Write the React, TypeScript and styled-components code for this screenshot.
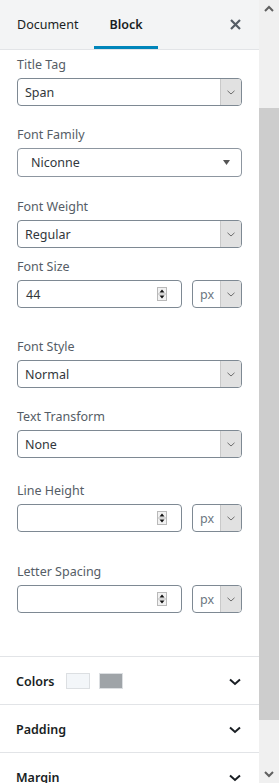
import React from "react";
import styled, { createGlobalStyle } from "styled-components";

const GlobalStyle = createGlobalStyle`
  html, body {
    margin: 0;
    padding: 0;
    overflow: hidden;
    background: #fff;
  }
  body {
    font-family: "Noto Sans", "Open Sans", sans-serif;
    color: #191e23;
  }
`;

const Frame = styled.div`
  display: flex;
  width: 279px;
  height: 783px;
  overflow: hidden;
`;

const Sidebar = styled.div`
  width: 259px;
  display: flex;
  flex-direction: column;
  background: #fff;
  overflow: hidden;
`;

const Header = styled.div`
  height: 49px;
  flex-shrink: 0;
  display: flex;
  align-items: stretch;
  background: #f3f4f5;
  border-bottom: 1px solid #e2e4e7;
  padding-left: 2px;
`;

const Tab = styled.div<{ $active?: boolean }>`
  display: flex;
  align-items: center;
  padding: 3px 15px 0;
  margin-right: 1px;
  font-size: 12.5px;
  color: #191e23;
  font-weight: ${(p) => (p.$active ? 600 : 400)};
  border-bottom: 3px solid ${(p) => (p.$active ? "#0085ba" : "transparent")};
`;

const CloseButton = styled.div`
  margin-left: auto;
  display: flex;
  align-items: center;
  padding: 0 18px 0 12px;
`;

const Body = styled.div`
  padding: 6px 17px 0 17px;
`;

const Field = styled.div<{ $after: number }>`
  margin-bottom: ${(p) => p.$after}px;
`;

const Label = styled.div`
  font-size: 12.5px;
  line-height: 18px;
  color: #555d66;
  margin-bottom: 4px;
`;

const SelectBox = styled.div`
  box-sizing: border-box;
  height: 28px;
  display: flex;
  align-items: stretch;
  border: 1px solid #7e8993;
  border-radius: 4px;
  overflow: hidden;
  background: #fff;
`;

const SelectValue = styled.div<{ $muted?: boolean }>`
  flex: 1;
  display: flex;
  align-items: center;
  padding-left: 7px;
  font-size: 12.5px;
  color: ${(p) => (p.$muted ? "#6c7781" : "#32373c")};
`;

const ArrowBox = styled.div`
  width: 20px;
  display: flex;
  align-items: center;
  justify-content: center;
  background: #e1e1e1;
  border-left: 1px solid #c9c9c9;
`;

const FontPicker = styled.div`
  box-sizing: border-box;
  height: 29px;
  display: flex;
  align-items: center;
  justify-content: space-between;
  padding: 0 11px 0 13px;
  border: 1px solid #8d96a0;
  border-radius: 4px;
  font-size: 12.5px;
  color: #32373c;
`;

const Row = styled.div`
  display: flex;
  gap: 10px;
`;

const NumberBox = styled.div`
  box-sizing: border-box;
  width: 165px;
  height: 28px;
  display: flex;
  align-items: center;
  padding: 0 14px 0 8px;
  border: 1px solid #7e8993;
  border-radius: 4px;
  font-size: 12.5px;
  color: #32373c;
`;

const NumberValue = styled.div`
  flex: 1;
`;

const UnitBox = styled(SelectBox)`
  width: 50px;
`;

const Panel = styled.div`
  box-sizing: border-box;
  height: 48px;
  flex-shrink: 0;
  display: flex;
  align-items: center;
  padding: 2px 18px 0 16px;
  border-top: 1px solid #e2e4e7;
`;

const PanelTitle = styled.div`
  font-size: 12.5px;
  font-weight: 600;
  color: #191e23;
`;

const Swatches = styled.div`
  display: flex;
  gap: 9px;
  margin-left: 11px;
  margin-top: -2px;
`;

const Swatch = styled.div<{ $color: string }>`
  box-sizing: border-box;
  width: 24px;
  height: 16px;
  background: ${(p) => p.$color};
  border: 1px solid #dcdfe2;
`;

const PanelChevron = styled.div`
  margin-left: auto;
  display: flex;
`;

const Scrollbar = styled.div`
  width: 20px;
  flex-shrink: 0;
  display: flex;
  flex-direction: column;
  background: #f0f0f0;
`;

const ScrollArrow = styled.div`
  height: 17px;
  display: flex;
  align-items: center;
  justify-content: center;
`;

const Track = styled.div`
  flex: 1;
  padding-top: 91px;
`;

const Thumb = styled.div`
  height: 612px;
  background: #cdcdcd;
`;

const SmallChevron = () => (
  <svg width="8" height="5" viewBox="0 0 8 5">
    <path d="M0.5 0.8 L4 4 L7.5 0.8" fill="none" stroke="#6d6d6d" strokeWidth="1" />
  </svg>
);

const Spinner = () => (
  <svg width="10" height="14" viewBox="0 0 10 14">
    <rect x="0.5" y="0.5" width="9" height="13" fill="#f2f2f2" stroke="#b9b9b9" />
    <line x1="1" y1="7" x2="9" y2="7" stroke="#b9b9b9" />
    <path d="M2.5 5.5 L5 2.5 L7.5 5.5 Z" fill="#111" />
    <path d="M2.5 8.5 L5 11.5 L7.5 8.5 Z" fill="#111" />
  </svg>
);

const Select = ({ value }: { value: string }) => (
  <SelectBox>
    <SelectValue>{value}</SelectValue>
    <ArrowBox>
      <SmallChevron />
    </ArrowBox>
  </SelectBox>
);

const SizeRow = ({ value }: { value?: string }) => (
  <Row>
    <NumberBox>
      <NumberValue>{value}</NumberValue>
      <Spinner />
    </NumberBox>
    <UnitBox>
      <SelectValue $muted>px</SelectValue>
      <ArrowBox>
        <SmallChevron />
      </ArrowBox>
    </UnitBox>
  </Row>
);

const BoldChevron = () => (
  <svg width="12" height="8" viewBox="0 0 12 8">
    <path d="M1 1.5 L6 6 L11 1.5" fill="none" stroke="#191e23" strokeWidth="2" />
  </svg>
);

export default function App() {
  return (
    <>
      <GlobalStyle />
      <Frame>
        <Sidebar>
          <Header>
            <Tab>Document</Tab>
            <Tab $active>Block</Tab>
            <CloseButton>
              <svg width="11" height="11" viewBox="0 0 11 11">
                <path d="M1 1 L10 10 M10 1 L1 10" stroke="#555d66" strokeWidth="2.2" />
              </svg>
            </CloseButton>
          </Header>
          <Body>
            <Field $after={20}>
              <Label>Title Tag</Label>
              <Select value="Span" />
            </Field>
            <Field $after={21}>
              <Label>Font Family</Label>
              <FontPicker>
                Niconne
                <svg width="7" height="5" viewBox="0 0 7 5">
                  <path d="M0 0 H7 L3.5 5 Z" fill="#555" />
                </svg>
              </FontPicker>
            </Field>
            <Field $after={10}>
              <Label>Font Weight</Label>
              <Select value="Regular" />
            </Field>
            <Field $after={30}>
              <Label>Font Size</Label>
              <SizeRow value="44" />
            </Field>
            <Field $after={20}>
              <Label>Font Style</Label>
              <Select value="Normal" />
            </Field>
            <Field $after={24}>
              <Label>Text Transform</Label>
              <Select value="None" />
            </Field>
            <Field $after={31}>
              <Label>Line Height</Label>
              <SizeRow />
            </Field>
            <Field $after={43}>
              <Label>Letter Spacing</Label>
              <SizeRow />
            </Field>
          </Body>
          <Panel>
            <PanelTitle>Colors</PanelTitle>
            <Swatches>
              <Swatch $color="#f3f6f9" />
              <Swatch $color="#9fa4a8" />
            </Swatches>
            <PanelChevron>
              <BoldChevron />
            </PanelChevron>
          </Panel>
          <Panel>
            <PanelTitle>Padding</PanelTitle>
            <PanelChevron>
              <BoldChevron />
            </PanelChevron>
          </Panel>
          <Panel>
            <PanelTitle>Margin</PanelTitle>
            <PanelChevron>
              <BoldChevron />
            </PanelChevron>
          </Panel>
        </Sidebar>
        <Scrollbar>
          <ScrollArrow>
            <svg width="10" height="7" viewBox="0 0 10 7">
              <path d="M1 6 L5 2 L9 6" fill="none" stroke="#606060" strokeWidth="2" />
            </svg>
          </ScrollArrow>
          <Track>
            <Thumb />
          </Track>
          <ScrollArrow>
            <svg width="10" height="7" viewBox="0 0 10 7">
              <path d="M1 1 L5 5 L9 1" fill="none" stroke="#606060" strokeWidth="2" />
            </svg>
          </ScrollArrow>
        </Scrollbar>
      </Frame>
    </>
  );
}
